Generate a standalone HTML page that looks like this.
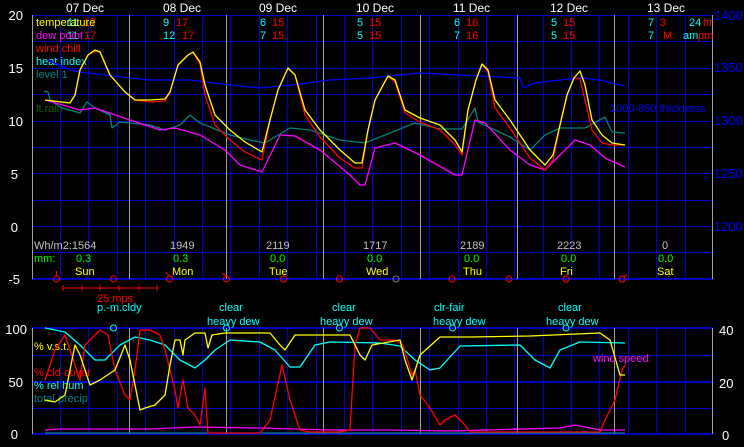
<!DOCTYPE html>
<html><head><meta charset="utf-8"><style>
html,body{margin:0;padding:0;background:#000;width:744px;height:447px;overflow:hidden}
svg{display:block}
text{font-family:"Liberation Sans",sans-serif;font-size:11px}
</style></head><body>
<svg width="744" height="447" viewBox="0 0 744 447" xmlns="http://www.w3.org/2000/svg">
<rect width="744" height="447" fill="#000"/>
<g stroke="#0000c8" stroke-width="1" fill="none">
<path d="M32 15.5H713M32 41.5H713M32 68.5H713M32 94.5H713M32 121.5H713M32 147.5H713M32 173.5H713M32 200.5H713M32 226.5H713M32 252.5H713"/>
<path d="M32 355.5H713M32 408.5H713"/>
<path d="M60.5 15V279M88.5 15V279M117.5 15V279M145.5 15V279M174.5 15V279M202.5 15V279M230.5 15V279M259.5 15V279M287.5 15V279M316.5 15V279M344.5 15V279M372.5 15V279M401.5 15V279M429.5 15V279M458.5 15V279M486.5 15V279M514.5 15V279M543.5 15V279M571.5 15V279M599.5 15V279M628.5 15V279M656.5 15V279M685.5 15V279"/>
<path d="M60.5 328V434M88.5 328V434M117.5 328V434M145.5 328V434M174.5 328V434M202.5 328V434M230.5 328V434M259.5 328V434M287.5 328V434M316.5 328V434M344.5 328V434M372.5 328V434M401.5 328V434M429.5 328V434M458.5 328V434M486.5 328V434M514.5 328V434M543.5 328V434M571.5 328V434M599.5 328V434M628.5 328V434M656.5 328V434M685.5 328V434"/>
</g>
<g stroke="#0000ff" stroke-width="1.5" fill="none">
<path d="M32 279H713M32 328H713M32 382H713M32 434H713"/>
</g>
<g stroke="#a0a0a0" stroke-width="1" fill="none">
<path d="M32.5 15V279M129.5 15V279M226.5 15V279M323.5 15V279M420.5 15V279M517.5 15V279M614.5 15V279M712.5 15V279"/>
<path d="M32.5 328V434M129.5 328V434M226.5 328V434M323.5 328V434M420.5 328V434M517.5 328V434M614.5 328V434M712.5 328V434"/>
</g>
<g fill="#fff" text-anchor="end">
<text x="23" y="20" style="font-size:13px">20</text><text x="23" y="73" style="font-size:13px">15</text><text x="23" y="126" style="font-size:13px">10</text><text x="18" y="179" style="font-size:13px">5</text><text x="18" y="232" style="font-size:13px">0</text><text x="20" y="284" style="font-size:13px">-5</text>
<text x="27" y="334" style="font-size:13px">100</text><text x="23" y="387" style="font-size:13px">50</text><text x="18" y="439" style="font-size:13px">0</text>
</g>
<g fill="#0000ff">
<text x="714" y="20" style="font-size:13px">1400</text><text x="714" y="72" style="font-size:13px">1350</text><text x="714" y="125" style="font-size:13px">1300</text><text x="714" y="178" style="font-size:13px">1250</text><text x="714" y="231" style="font-size:13px">1200</text>
</g>
<g fill="#fff"><text x="719" y="335" style="font-size:13px">40</text><text x="719" y="388" style="font-size:13px">20</text><text x="722" y="440" style="font-size:13px">0</text></g>
<g fill="#fff" style="font-size:12px">
<text x="66" y="12" style="font-size:12px">07 Dec</text><text x="163" y="12" style="font-size:12px">08 Dec</text><text x="259" y="12" style="font-size:12px">09 Dec</text><text x="356" y="12" style="font-size:12px">10 Dec</text><text x="453" y="12" style="font-size:12px">11 Dec</text><text x="550" y="12" style="font-size:12px">12 Dec</text><text x="647" y="12" style="font-size:12px">13 Dec</text>
</g>
<g>
<text x="67" y="26" fill="#00ffff">11</text><text x="84" y="26" fill="#ff0000">17</text>
<text x="67" y="39" fill="#00ffff">11</text><text x="84" y="39" fill="#ff0000">17</text>
<text x="163" y="26" fill="#00ffff">9</text><text x="176" y="26" fill="#ff0000">17</text>
<text x="163" y="39" fill="#00ffff">12</text><text x="182" y="39" fill="#ff0000">17</text>
<text x="260" y="26" fill="#00ffff">6</text><text x="272" y="26" fill="#ff0000">15</text>
<text x="260" y="39" fill="#00ffff">7</text><text x="272" y="39" fill="#ff0000">15</text>
<text x="357" y="26" fill="#00ffff">5</text><text x="369" y="26" fill="#ff0000">15</text>
<text x="357" y="39" fill="#00ffff">5</text><text x="369" y="39" fill="#ff0000">15</text>
<text x="454" y="26" fill="#00ffff">6</text><text x="466" y="26" fill="#ff0000">16</text>
<text x="454" y="39" fill="#00ffff">7</text><text x="466" y="39" fill="#ff0000">16</text>
<text x="551" y="26" fill="#00ffff">5</text><text x="563" y="26" fill="#ff0000">15</text>
<text x="551" y="39" fill="#00ffff">5</text><text x="563" y="39" fill="#ff0000">15</text>
<text x="648" y="26" fill="#00ffff">7</text><text x="660" y="26" fill="#ff0000">3</text>
<text x="648" y="39" fill="#00ffff">7</text><text x="663" y="39" fill="#ff0000">M</text>
<text x="689" y="26" fill="#00ffff">24</text><text x="703" y="26" fill="#ff0000">hr</text>
<text x="683" y="39" fill="#00ffff">am</text><text x="698" y="39" fill="#ff0000">pm</text>
</g>
<g>
<text x="36" y="26" fill="#ffff00">temperature</text>
<text x="36" y="39" fill="#ff00ff">dew point</text>
<text x="36" y="52" fill="#ff0000">wind chill</text>
<text x="36" y="65" fill="#00ffff">heat index</text>
<text x="36" y="78" fill="#008080">level 1</text>
<text x="36" y="112" fill="#006400">lt.rain</text>
<text x="610" y="112" fill="#0000ff">1000-850 thickness</text>
</g>
<g fill="none" stroke-width="1.3" stroke-linejoin="round">
<polyline stroke="#0000ff" points="48,60 70,70 80,72 130,78 150,80 190,80 230,85 260,88 300,84 330,80 370,78 420,73 460,75 480,76 500,77 520,78 523,88 535,83 560,80 580,78 600,80 625,86"/>
<polyline stroke="#008080" points="44,91 48,92 50,100 62,108 80,113 87,102 95,108 110,115 112,128 120,122 150,125 165,130 180,125 190,115 200,123 230,135 250,140 265,143 290,128 310,130 340,140 365,143 385,135 415,123 440,129 462,129 475,108 478,122 495,130 510,137 530,150 545,135 560,128 585,128 605,117 612,132 625,133"/>
<polyline stroke="#ff00ff" points="45,100 80,110 95,108 130,120 160,130 175,128 200,135 225,150 240,165 262,172 280,135 295,136 320,150 350,175 360,185 365,185 375,148 395,143 420,155 455,175 462,175 475,120 485,123 510,150 530,165 545,170 555,160 575,140 590,145 605,158 625,167"/>
<polyline stroke="#ff0000" points="45,100 70,103 75,95 80,70 88,55 95,51 100,52 110,75 125,92 135,100 150,102 165,101 170,92 178,65 188,55 193,52 200,64 205,95 215,125 230,140 245,152 262,160 270,120 278,90 288,68 295,75 305,115 320,137 340,158 355,168 362,168 368,130 375,100 388,76 395,82 405,113 420,122 440,130 455,145 462,155 468,110 476,80 482,64 488,72 495,108 510,128 530,158 545,170 553,160 560,125 567,95 574,78 580,79 585,100 592,130 602,143 612,145 625,145"/>
<polyline stroke="#ffff00" points="45,100 70,103 75,95 80,70 88,55 95,50 100,52 110,75 125,92 135,100 150,100 165,99 170,92 178,65 188,55 193,52 200,62 205,85 215,115 230,130 245,142 262,152 270,120 278,90 288,68 295,75 305,110 320,130 340,150 355,163 362,163 368,130 375,100 388,76 395,80 405,110 420,118 440,125 455,140 462,152 468,110 476,80 482,64 488,70 495,100 510,120 530,150 545,165 553,155 560,125 567,95 574,78 580,71 585,85 592,120 602,135 612,143 625,145"/>
</g>
<g>
<text x="34" y="249" fill="#c0c0c0">Wh/m2:1564</text>
<text x="170" y="249" fill="#c0c0c0">1949</text>
<text x="266" y="249" fill="#c0c0c0">2119</text>
<text x="363" y="249" fill="#c0c0c0">1717</text>
<text x="460" y="249" fill="#c0c0c0">2189</text>
<text x="557" y="249" fill="#c0c0c0">2223</text>
<text x="662" y="249" fill="#c0c0c0">0</text>
<text x="34" y="262" fill="#00ff00">mm:</text>
<text x="76" y="262" fill="#00ff00">0.3</text><text x="173" y="262" fill="#00ff00">0.3</text><text x="270" y="262" fill="#00ff00">0.0</text><text x="367" y="262" fill="#00ff00">0.0</text><text x="464" y="262" fill="#00ff00">0.0</text><text x="561" y="262" fill="#00ff00">0.0</text><text x="658" y="262" fill="#00ff00">0.0</text>
<text x="75" y="275" fill="#ffff00">Sun</text><text x="172" y="275" fill="#ffff00">Mon</text><text x="269" y="275" fill="#ffff00">Tue</text><text x="366" y="275" fill="#ffff00">Wed</text><text x="463" y="275" fill="#ffff00">Thu</text><text x="560" y="275" fill="#ffff00">Fri</text><text x="657" y="275" fill="#ffff00">Sat</text>
</g>
<g fill="none" stroke="#ff0000" stroke-width="1">
<circle cx="56.5" cy="279" r="3"/><circle cx="113.5" cy="279" r="3"/><circle cx="169.5" cy="279" r="3"/><circle cx="226.5" cy="279" r="3"/><circle cx="283.5" cy="279" r="3"/><circle cx="339.5" cy="279" r="3"/><circle cx="452" cy="279" r="3"/><circle cx="509" cy="279" r="3"/><circle cx="566" cy="279" r="3"/><circle cx="622" cy="279" r="3"/>
<path d="M56.5 276V271M169 276L166 272M226 276L222 273M623 277L627 275"/>
<path d="M63 288H157M63 285V291M82 285V291M100 285V291M119 285V291M139 285V291M157 285V291"/>
</g>
<g fill="none" stroke="#808080" stroke-width="1"><circle cx="396" cy="279" r="3"/></g>
<text x="97" y="302" fill="#ff0000">25 mps</text>
<text x="97" y="311" fill="#00ffff">p.-m.cldy</text>
<g fill="#00ffff">
<text x="219" y="311">clear</text><text x="207" y="325">heavy dew</text>
<text x="332" y="311">clear</text><text x="320" y="325">heavy dew</text>
<text x="434" y="311">clr-fair</text><text x="433" y="325">heavy dew</text>
<text x="558" y="311">clear</text><text x="546" y="325">heavy dew</text>
</g>
<g fill="none" stroke="#00ffff"><circle cx="113.5" cy="328" r="3"/><circle cx="226.5" cy="328" r="3"/><circle cx="339.5" cy="328" r="3"/><circle cx="452.5" cy="328" r="3"/><circle cx="566" cy="328" r="3"/></g>
<g>
<text x="34" y="350" fill="#ffff00">% v.s.t.</text>
<text x="34" y="376" fill="#ff0000">% cld cover</text>
<text x="34" y="389" fill="#00ffff">% rel hum</text>
<text x="34" y="402" fill="#008080">total precip</text>
<text x="593" y="362" fill="#ff00ff">wind speed</text>
</g>
<g fill="none" stroke-width="1.3" stroke-linejoin="round">
<polyline stroke="#008080" points="45,433 625,433"/>
<polyline stroke="#ff00ff" points="45,430 60,429 80,429 150,429 195,427 260,428 330,430 390,430 450,431 560,428 575,425 600,430 625,430"/>
<polyline stroke="#00ffff" points="45,328 65,332 80,345 95,360 105,360 120,345 135,337 150,340 165,345 180,360 195,368 205,360 215,350 230,340 260,342 275,350 290,367 300,367 315,345 330,342 380,343 400,346 415,360 430,370 440,368 460,346 520,345 535,360 550,368 560,350 580,342 625,343"/>
<polyline stroke="#ff0000" points="45,380 55,350 65,335 75,365 80,380 85,345 100,330 108,335 115,370 125,395 130,400 135,370 140,330 150,330 160,335 165,350 175,390 178,408 183,380 188,408 195,415 200,425 205,388 208,433 260,433 270,420 282,365 290,400 300,430 310,432 340,432 350,430 355,345 360,328 370,328 380,340 395,340 403,345 412,375 415,370 420,395 430,408 436,418 440,425 445,420 455,415 465,425 470,432 600,432 605,420 615,400 622,370 625,365"/>
<polyline stroke="#ffff00" points="45,400 55,402 65,395 75,345 80,355 90,385 100,380 115,370 125,345 130,360 140,410 145,408 155,405 165,395 170,365 175,340 180,340 183,355 185,340 195,333 205,333 208,348 212,335 225,333 270,333 280,345 285,350 295,335 320,335 350,335 360,355 365,360 372,345 400,340 405,360 412,380 420,355 440,337 470,337 530,336 600,333 610,340 620,375 625,375"/>
</g>
</svg>
</body></html>
